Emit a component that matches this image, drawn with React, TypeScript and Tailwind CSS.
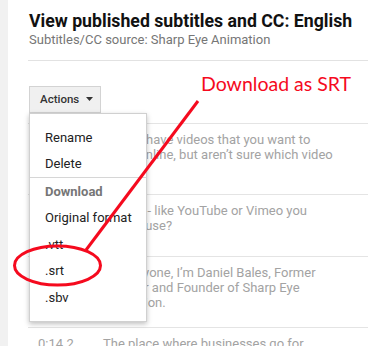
const rows = [
  {
    time: '0:00.0',
    lines: ['Do you have videos that you want to', 'share online, but aren’t sure which video', 'host'],
  },
  { time: '0:05.1', lines: ['service - like YouTube or Vimeo you', 'should use?'] },
  {
    time: '0:09.4',
    lines: ['Hi everyone, I’m Daniel Bales, Former', 'Director and Founder of Sharp Eye', 'Animation.'],
  },
  { time: '0:14.2', lines: ['The place where businesses go for'] },
]

function Caret() {
  return (
    <svg width="7" height="5" viewBox="0 0 7 5" className="ml-[7px]">
      <path d="M0 0h7L3.5 4z" fill="#333" />
    </svg>
  )
}

function ActionsMenu() {
  return (
    <div className="absolute left-0 top-full z-10 w-[118px] border border-[#d0d0d0] bg-white py-[10px] text-[13px] text-[#222] shadow-[0_2px_5px_rgba(0,0,0,0.25)]">
      <div className="flex h-[26.5px] items-center pl-[15px]">Rename</div>
      <div className="flex h-[26.5px] items-center pl-[15px]">Delete</div>
      <div className="h-px bg-[#d6d6d6]" />
      <div className="flex h-[26.5px] items-center pl-[15px] font-bold text-[#767676]">Download</div>
      <div className="flex h-[26.5px] items-center pl-[15px]">Original format</div>
      <div className="flex h-[26.5px] items-center pl-[15px]">.vtt</div>
      <div className="flex h-[26.5px] items-center pl-[15px]">.srt</div>
      <div className="flex h-[26.5px] items-center pl-[15px]">.sbv</div>
    </div>
  )
}

export default function App() {
  return (
    <div className="relative flex h-[346px] w-[368px] overflow-hidden bg-white font-['Roboto',sans-serif]">
      <div className="w-[8px] shrink-0 bg-[#f1f1f1]" />

      <div className="flex-1 pl-[20px]">
        <div className="pl-px pt-[10px]">
          <h1 className="whitespace-nowrap text-[17.7px] leading-[22px] font-bold text-[#111]">
            View published subtitles and CC: English
          </h1>
          <p className="text-[13px] leading-[16px] text-[#767676]">
            Subtitles/CC source: Sharp Eye Animation
          </p>
        </div>

        <div className="mt-[12px] h-px bg-[#e2e2e2]" />

        <div className="relative ml-px mt-[25px] inline-block">
          <button className="flex h-[27px] w-[72px] items-center border border-[#d3d3d3] bg-[#f0f0f0] pl-[10px] text-[11.5px] font-medium text-[#333]">
            Actions
            <Caret />
          </button>
          <ActionsMenu />
        </div>

        <div className="mt-[10px]">
          {rows.map((row) => (
            <div
              key={row.time}
              className="flex min-h-[62px] border-t border-[#e4e4e4] pb-[17px] pt-[8px] text-[13px] leading-[15px] text-[#a3a3a3]"
            >
              <div className="w-[75px] shrink-0 pl-[10px]">{row.time}</div>
              <div>
                {row.lines.map((line) => (
                  <div key={line}>{line}</div>
                ))}
              </div>
            </div>
          ))}
        </div>
      </div>

      <div className="absolute left-[201px] top-[72px] font-['Lato',sans-serif] text-[19.5px] leading-[24px] text-[#f50a1e]">
        Download as SRT
      </div>

      <svg
        className="pointer-events-none absolute left-0 top-0 z-20"
        width="368"
        height="346"
        viewBox="0 0 368 346"
      >
        <line x1="198" y1="101" x2="86" y2="250" stroke="#f50a1e" strokeWidth="3" />
        <ellipse cx="57.5" cy="265.5" rx="43" ry="19.5" fill="none" stroke="#f50a1e" strokeWidth="3" />
      </svg>
    </div>
  )
}
